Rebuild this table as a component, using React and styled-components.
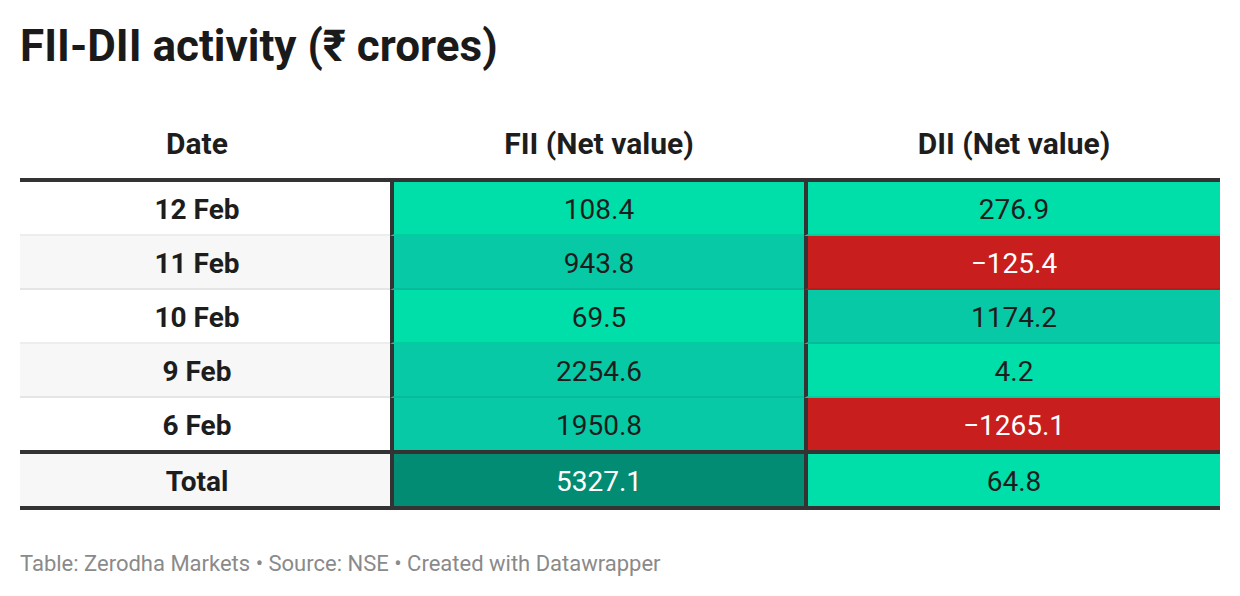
import styled, { createGlobalStyle } from 'styled-components';

const GlobalStyle = createGlobalStyle`
  * { box-sizing: border-box; }
  body {
    margin: 0;
    background: #fff;
    font-family: Roboto, "Liberation Sans", sans-serif;
    color: #1d1d1d;
  }
`;

const colors = {
  bright: '#00dea9',
  mid: '#08c9a6',
  dark: '#018c73',
  red: '#c81e1e',
};

const rows = [
  { date: '12 Feb', fii: ['108.4', 'bright'], dii: ['276.9', 'bright'] },
  { date: '11 Feb', fii: ['943.8', 'mid'], dii: ['\u2212125.4', 'red'] },
  { date: '10 Feb', fii: ['69.5', 'bright'], dii: ['1174.2', 'mid'] },
  { date: '9 Feb', fii: ['2254.6', 'mid'], dii: ['4.2', 'bright'] },
  { date: '6 Feb', fii: ['1950.8', 'mid'], dii: ['\u22121265.1', 'red'] },
];

function Chart() {
  return (
    <Wrapper>
      <Title>FII-DII activity (₹ crores)</Title>
      <Table>
        <HeadRow>
          <HeadCell $date>Date</HeadCell>
          <HeadCell>FII (Net value)</HeadCell>
          <HeadCell>DII (Net value)</HeadCell>
        </HeadRow>
        <Body>
          {rows.map((r, i) => (
            <Row key={r.date}>
              <DateCell $shade={i % 2 === 1}>{r.date}</DateCell>
              <ValueCell $bg={colors[r.fii[1]]} $light={r.fii[1] === 'red' || r.fii[1] === 'dark'}>{r.fii[0]}</ValueCell>
              <ValueCell $bg={colors[r.dii[1]]} $light={r.dii[1] === 'red' || r.dii[1] === 'dark'}>{r.dii[0]}</ValueCell>
            </Row>
          ))}
        </Body>
        <TotalRow>
          <DateCell $shade>Total</DateCell>
          <ValueCell $bg={colors.dark} $light>5327.1</ValueCell>
          <ValueCell $bg={colors.bright}>64.8</ValueCell>
        </TotalRow>
      </Table>
      <Footer>Table: Zerodha Markets • Source: NSE • Created with Datawrapper</Footer>
    </Wrapper>
  );
}

export default function App() {
  return (
    <>
      <GlobalStyle />
      <Chart />
    </>
  );
}

const Wrapper = styled.div`
  width: 1240px;
  height: 596px;
  padding: 20px 20px 0;
`;

const Title = styled.h1`
  margin: 0;
  font-size: 44px;
  line-height: 52px;
  font-weight: 700;
  color: #1a1a1a;
`;

const Table = styled.div`
  width: 1200px;
  margin-top: 36px;
`;

const grid = `
  display: grid;
  grid-template-columns: 370px 414px 416px;
`;

const HeadRow = styled.div`
  ${grid}
  height: 70px;
`;

const HeadCell = styled.div`
  display: flex;
  align-items: center;
  justify-content: center;
  font-size: 30px;
  font-weight: 700;
  color: #1d1d1d;
  padding-right: ${(p) => (p.$date ? '16px' : '0')};
  padding-left: ${(p) => (p.$date ? '0' : '4px')};
`;

const Body = styled.div`
  border-top: 4px solid #333;
`;

const Row = styled.div`
  ${grid}
  height: 54px;
  & > div {
    border-bottom: 2px solid rgba(0, 0, 0, 0.07);
  }
  &:last-child {
    height: 52px;
  }
  &:last-child > div {
    border-bottom: none;
  }
`;

const TotalRow = styled.div`
  ${grid}
  height: 60px;
  border-top: 4px solid #333;
  border-bottom: 4px solid #333;
`;

const DateCell = styled.div`
  display: flex;
  align-items: center;
  justify-content: center;
  padding-right: 16px;
  padding-top: 2px;
  background: ${(p) => (p.$shade ? '#f7f7f7' : '#fff')};
  font-size: 28px;
  font-weight: 700;
  color: #1d1d1d;
`;

const ValueCell = styled.div`
  display: flex;
  align-items: center;
  justify-content: center;
  padding-top: 2px;
  border-left: 4px solid #333;
  background: ${(p) => p.$bg};
  color: ${(p) => (p.$light ? '#fff' : '#1d1d1d')};
  font-size: 28px;
`;

const Footer = styled.div`
  margin-top: 41px;
  font-size: 22px;
  line-height: 26px;
  color: #8a8a8a;
`;
